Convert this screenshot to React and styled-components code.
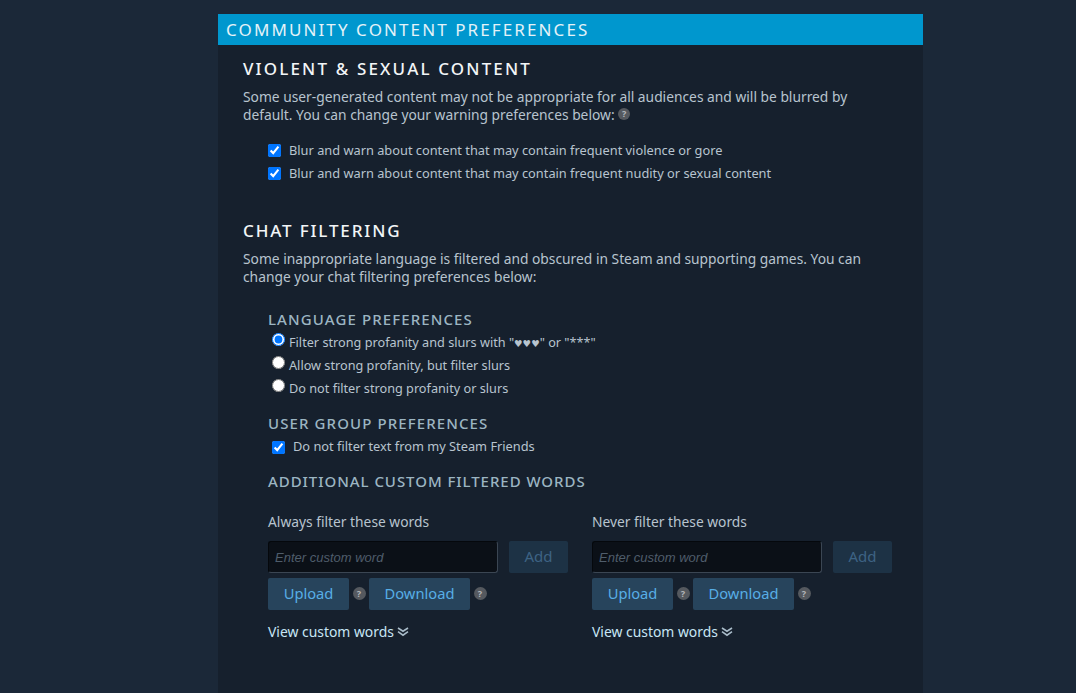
import styled, { createGlobalStyle } from 'styled-components';

const GlobalStyle = createGlobalStyle`
  html, body {
    margin: 0;
    padding: 0;
    height: 693px;
    overflow: hidden;
    background: #1b2838;
  }
`;

function HelpIcon({ $size = 13 }) {
  return <Help $size={$size}>?</Help>;
}

function WordColumn({ title }) {
  return (
    <Column>
      <ColumnTitle>{title}</ColumnTitle>
      <InputRow>
        <WordInput placeholder="Enter custom word" />
        <AddButton>Add</AddButton>
      </InputRow>
      <ButtonRow>
        <ActionButton>Upload</ActionButton>
        <HelpSlot><HelpIcon /></HelpSlot>
        <ActionButton $wide>Download</ActionButton>
        <HelpSlot><HelpIcon /></HelpSlot>
      </ButtonRow>
      <ViewLink>
        View custom words
        <Chevrons width="12" height="10" viewBox="0 0 12 10" fill="none" stroke="#a9bcc9" strokeWidth="1.6">
          <path d="M1 1l5 3.2L11 1" />
          <path d="M1 4.6l5 3.6 5-3.6" />
        </Chevrons>
      </ViewLink>
    </Column>
  );
}

export default function App() {
  return (
    <Page>
      <GlobalStyle />
      <Panel>
        <Banner>COMMUNITY CONTENT PREFERENCES</Banner>
        <Content>
          <SectionTitle>VIOLENT &amp; SEXUAL CONTENT</SectionTitle>
          <Paragraph>
            Some user-generated content may not be appropriate for all audiences and will be blurred by
            default. You can change your warning preferences below: <HelpIcon $size={12} />
          </Paragraph>
          <CheckList>
            <CheckRow>
              <Check type="checkbox" defaultChecked />
              Blur and warn about content that may contain frequent violence or gore
            </CheckRow>
            <CheckRow>
              <Check type="checkbox" defaultChecked />
              Blur and warn about content that may contain frequent nudity or sexual content
            </CheckRow>
          </CheckList>

          <SectionTitle $second>CHAT FILTERING</SectionTitle>
          <Paragraph>
            Some inappropriate language is filtered and obscured in Steam and supporting games. You can
            change your chat filtering preferences below:
          </Paragraph>

          <Prefs>
            <SubTitle>LANGUAGE PREFERENCES</SubTitle>
            <RadioRow>
              <Radio type="radio" name="lang" defaultChecked />
              <span>Filter strong profanity and slurs with "<Hearts>♥♥♥</Hearts>" or "***"</span>
            </RadioRow>
            <RadioRow>
              <Radio type="radio" name="lang" />
              Allow strong profanity, but filter slurs
            </RadioRow>
            <RadioRow>
              <Radio type="radio" name="lang" />
              Do not filter strong profanity or slurs
            </RadioRow>

            <SubTitle $gap="16px">USER GROUP PREFERENCES</SubTitle>
            <FriendsRow>
              <FriendsCheck type="checkbox" defaultChecked />
              Do not filter text from my Steam Friends
            </FriendsRow>

            <SubTitle $gap="15px" $tight>ADDITIONAL CUSTOM FILTERED WORDS</SubTitle>
            <Columns>
              <WordColumn title="Always filter these words" />
              <WordColumn title="Never filter these words" />
            </Columns>
          </Prefs>
        </Content>
      </Panel>
    </Page>
  );
}

const Page = styled.div`
  height: 693px;
  padding: 14px 0 0 218px;
  box-sizing: border-box;
  font-family: "Noto Sans", "Open Sans", Arial, sans-serif;
`;

const Panel = styled.div`
  width: 705px;
  height: 679px;
  background: #16202d;
`;

const Banner = styled.div`
  height: 31px;
  line-height: 32px;
  padding-left: 8px;
  background: #0097ce;
  color: #e4f2f8;
  font-size: 17px;
  letter-spacing: 2.1px;
`;

const Content = styled.div`
  padding: 14px 0 0 25px;
`;

const SectionTitle = styled.h2`
  margin: ${(p) => (p.$second ? '39px' : '0')} 0 0;
  height: 20px;
  line-height: 20px;
  color: #f2f5f7;
  font-size: 17px;
  font-weight: 500;
  letter-spacing: ${(p) => (p.$second ? '1.85px' : '2.15px')};
`;

const Paragraph = styled.p`
  margin: 9px 0 0;
  width: 640px;
  color: #b8c4cf;
  font-size: 13.8px;
  line-height: 18px;
`;

const Help = styled.span`
  display: inline-flex;
  align-items: center;
  justify-content: center;
  width: ${(p) => p.$size}px;
  height: ${(p) => p.$size}px;
  border-radius: 50%;
  background: #55595f;
  color: #b3b6ba;
  font-size: 9px;
  font-weight: 700;
  line-height: 1;
  vertical-align: 3px;
`;

const CheckList = styled.div`
  margin: 17px 0 0 25px;
  display: flex;
  flex-direction: column;
  gap: 5px;
`;

const CheckRow = styled.label`
  display: flex;
  align-items: center;
  height: 18px;
  color: #b8c4cf;
  font-size: 12.8px;
`;

const Check = styled.input`
  width: 13px;
  height: 13px;
  margin: 1px 8px 0 0;
  accent-color: #0075ff;
`;

const Prefs = styled.div`
  margin: 25px 0 0 25px;
`;

const SubTitle = styled.h3`
  margin: ${(p) => p.$gap || '0'} 0 0;
  height: 19px;
  line-height: 16px;
  color: #9cb5c2;
  font-size: 15px;
  font-weight: 500;
  letter-spacing: ${(p) => (p.$tight ? '0.95px' : '1.1px')};
`;

const RadioRow = styled.label`
  display: flex;
  align-items: center;
  height: 23px;
  color: #b8c4cf;
  font-size: 12.7px;
`;

const Hearts = styled.span`
  font-family: "DejaVu Sans", sans-serif;
  font-size: 9.5px;
`;

const Radio = styled.input`
  width: 13px;
  height: 13px;
  margin: -5px 4px 0 4px;
  accent-color: #0075ff;
`;

const FriendsRow = styled.label`
  display: flex;
  align-items: center;
  height: 24px;
  color: #b8c4cf;
  font-size: 12.8px;
`;

const FriendsCheck = styled.input`
  width: 13px;
  height: 13px;
  margin: 2px 8px 0 4px;
  accent-color: #0075ff;
`;

const Columns = styled.div`
  display: flex;
  margin-top: 20px;
`;

const Column = styled.div`
  width: 324px;
`;

const ColumnTitle = styled.div`
  height: 20px;
  line-height: 20px;
  color: #b8c4cf;
  font-size: 13.8px;
`;

const InputRow = styled.div`
  display: flex;
  gap: 11px;
  margin-top: 9px;
`;

const WordInput = styled.input`
  width: 230px;
  height: 32px;
  box-sizing: border-box;
  padding: 0 6px;
  background: #0b1017;
  border: 1px solid #3b4653;
  border-top-color: #05080c;
  border-left-color: #05080c;
  border-radius: 3px;
  color: #b8c4cf;
  font-family: "Liberation Sans", Arial, sans-serif;
  font-size: 13px;
  outline: none;

  &::placeholder {
    color: #4f5d6b;
    font-style: italic;
    opacity: 1;
  }
`;

const AddButton = styled.div`
  width: 59px;
  height: 32px;
  line-height: 31px;
  text-align: center;
  border-radius: 2px;
  background: #1d3245;
  color: #3d6384;
  font-size: 15px;
`;

const ButtonRow = styled.div`
  display: flex;
  align-items: center;
  margin-top: 5px;
`;

const ActionButton = styled.div`
  width: ${(p) => (p.$wide ? '101px' : '81px')};
  height: 32px;
  line-height: 30px;
  text-align: center;
  border-radius: 2px;
  background: #27445c;
  color: #57aee6;
  font-size: 14.7px;
`;

const HelpSlot = styled.div`
  width: 20px;
  display: flex;
  justify-content: center;
  margin-top: -2px;
`;

const ViewLink = styled.div`
  display: flex;
  align-items: center;
  gap: 3px;
  margin-top: 11px;
  height: 20px;
  color: #c7e6f5;
  font-size: 13.9px;
`;

const Chevrons = styled.svg`
  margin-top: 1px;
`;
